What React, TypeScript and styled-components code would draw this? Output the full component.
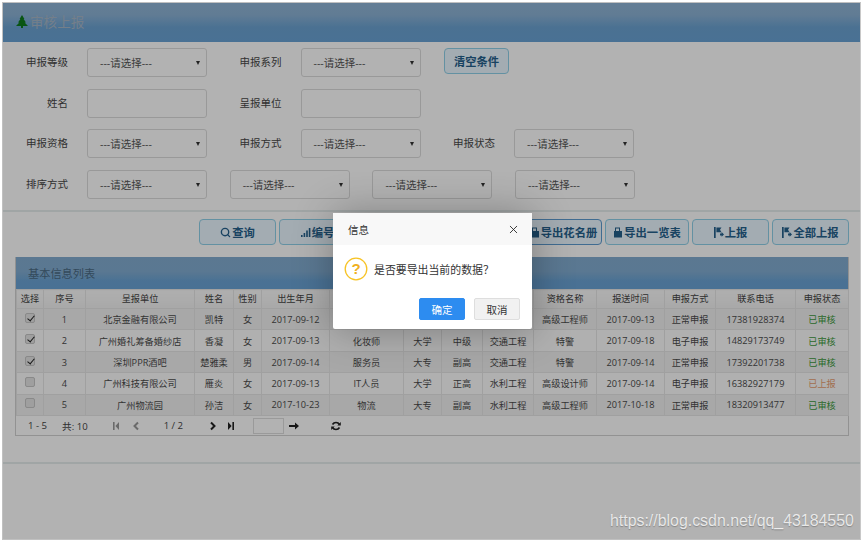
import React from "react";
import styled, { createGlobalStyle } from "styled-components";
import { Search, X } from "lucide-react";

const Global = createGlobalStyle`
  html, body { margin: 0; padding: 0; background: #fff; }
  body { font-family: "Open Sans", "Noto Sans CJK SC", sans-serif; color: #4a4a4a; overflow: hidden; }
  * { box-sizing: border-box; }
`;
const Page = styled.div`
  width: 864px; height: 541px; padding: 2px 0 0 2px; position: relative; overflow: hidden; background: #fff;
`;
const Frame = styled.div`
  position: relative; width: 859px; height: 538px; border: 1px solid #c0c0c0; border-right-color: #c8c8c8; background: #fff; overflow: hidden;
`;
const Header = styled.header`
  height: 39px; padding: 0 0 3px 13px; display: flex; align-items: center; gap: 2px;
  background: linear-gradient(#8fb4d6 0%, #8cb2d5 30%, #6ca3d2 62%, #69a2d4 100%);
`;
const HeaderTitle = styled.h1`
  margin: 0; font: 400 13.6px "Liberation Serif", "Noto Sans CJK SC", serif; color: #a6b6c6;
`;
const Filters = styled.section`
  padding: 6px 0 11px 23px; display: flex; flex-direction: column; gap: 11.7px; border-bottom: 2px solid #e6eded;
`;
const Row = styled.div`
  display: flex; align-items: flex-start; height: 29px;
`;
const Field = styled.div<{ $mr?: number }>`
  display: flex; align-items: center; flex: none; margin-right: ${p => p.$mr ?? 32.5}px;
`;
const FieldLabel = styled.label`
  width: 42px; text-align: right; white-space: nowrap; font-size: 10.5px; color: #474747; margin-right: 19px; flex: none;
  line-height: 29px;
`;
const SelectBox = styled.div<{ $mr?: number }>`
  width: 120px; height: 29px; flex: none; border: 1.5px solid #dcdcdc; border-radius: 3px; background: #fff;
  padding: 0 6px 0 12px; display: flex; align-items: center; justify-content: space-between;
  font-size: 10.5px; color: #555;
  margin-right: ${p => p.$mr ?? 0}px;
`;
const Caret = styled.span`
  width: 0; height: 0; border-left: 2.3px solid transparent; border-right: 2.3px solid transparent; border-top: 4px solid #333;
`;
const TextBox = styled.div`
  width: 120px; height: 29px; flex: none; border: 1.5px solid #dcdcdc; border-radius: 3px; background: #fff;
`;
const ActionButton = styled.button<{ $w?: number; $focus?: boolean }>`
  width: ${p => p.$w ?? 77}px; height: 26px; padding: 0; flex: none;
  display: inline-flex; align-items: center; justify-content: center; gap: 1px;
  border: 1.5px solid ${p => (p.$focus ? "#5c9bd0" : "#8fd0e8")}; border-radius: 4px;
  background: #eaf6ff; color: #24608c; font: 700 11.3px "Open Sans", "Noto Sans CJK SC", sans-serif;
`;
const Content = styled.section`
  height: 252px; padding-top: 7px; border-bottom: 2px solid #e6eded;
`;
const Toolbar = styled.div`
  display: flex; justify-content: flex-end; gap: 3px; padding-right: 11px;
`;
const TablePanel = styled.div`
  margin: 12px 0 0 12px; width: 834px; border: 1px solid #d2d2d2; border-top: 0;
`;
const PanelHead = styled.div`
  height: 32px; padding-left: 12px; display: flex; align-items: center; font-size: 11.2px; color: #4a6a84;
  background: linear-gradient(#83acd0 0%, #82acd1 45%, #6aa3d4 75%, #69a2d4 100%);
`;
const Grid = styled.table`
  width: 832px; border-collapse: collapse; table-layout: fixed; font-size: 9.2px;
`;
const Th = styled.th`
  height: 19px; padding: 0 0 2px; font-weight: 400; text-align: center; color: #444;
  border: 1px solid #e6e6e6; background: linear-gradient(#fafafa, #f2f2f2); white-space: nowrap; overflow: hidden;
`;
const Tr = styled.tr<{ $odd: boolean }>`
  background: ${p => (p.$odd ? "#f1f1f1" : "#fcfcfc")};
`;
const Td = styled.td<{ $status?: "ok" | "wait" }>`
  height: 21.4px; padding: 0; text-align: center; white-space: nowrap; overflow: hidden;
  border: 1px solid #e6e6e6; color: ${p => (p.$status === "ok" ? "#3c9a3c" : p.$status === "wait" ? "#e8a070" : "#4a4a4a")};
`;
const Check = styled.input`
  appearance: none; display: block; position: relative; margin: 0 auto 3px; width: 10px; height: 10px;
  border: 1px solid #c4c4c4; border-radius: 2px; background: #e4e4e4;
  &:checked::after {
    content: ""; position: absolute; left: 2.5px; top: 0; width: 3px; height: 6px;
    border: solid #222; border-width: 0 1.6px 1.6px 0; transform: rotate(40deg);
  }
`;
const Pager = styled.div`
  height: 19px; display: flex; align-items: center; font-size: 9.6px; color: #444; background: #fff;
`;
const PagerText = styled.span<{ $ml: number }>`
  margin-left: ${p => p.$ml}px; white-space: nowrap;
`;
const PagerIcon = styled.svg<{ $ml: number; $muted?: boolean }>`
  margin-left: ${p => p.$ml}px; width: 10px; height: 10px; flex: none; color: ${p => (p.$muted ? "#999" : "#222")};
`;
const PagerInput = styled.div`
  margin-left: 17px; width: 31px; height: 16px; border: 1px solid #ddd; background: #fff;
`;
const Overlay = styled.div`
  position: absolute; inset: 0; background: rgba(0, 0, 0, 0.3);
`;
const Dialog = styled.div`
  position: absolute; left: 330px; top: 210px; width: 199px; height: 116px; background: #fff; border-radius: 2px;
  box-shadow: 1px 1px 40px rgba(0, 0, 0, 0.3); display: flex; flex-direction: column;
`;
const DialogHead = styled.div`
  height: 32px; padding: 0 12px 0 15px; display: flex; align-items: center; justify-content: space-between;
  background: #f8f8f8; font-size: 10.5px; color: #333;
`;
const DialogBody = styled.div`
  height: 53px; padding: 0 0 5px 11px; display: flex; align-items: center; gap: 6px; font-size: 10.9px; color: #333;
`;
const DialogActions = styled.div`
  display: flex; justify-content: flex-end; gap: 9px; padding-right: 12px;
`;
const DialogButton = styled.button<{ $primary?: boolean }>`
  width: 46px; height: 22px; padding: 0; border-radius: 2px; font: 400 10.5px "Open Sans", "Noto Sans CJK SC", sans-serif;
  border: 1px solid ${p => (p.$primary ? "#2d8cf0" : "#dedede")};
  background: ${p => (p.$primary ? "#2d8cf0" : "#f1f1f1")};
  color: ${p => (p.$primary ? "#fff" : "#333")};
`;
const Watermark = styled.div`
  position: absolute; left: 610px; top: 512px; font: 400 15.9px "Liberation Sans", sans-serif; color: rgba(255, 255, 255, 0.78);
  text-shadow: 0 1px 1px rgba(0, 0, 0, 0.25); white-space: nowrap;
`;

const Ic = styled.svg`
  width: 10px; height: 11px; flex: none;
`;
const TreeIcon = () => (
  <svg width="12" height="13" viewBox="0 0 12 13" style={{ flex: "none" }}>
    <path fill="#0d7a1c" d="M6 0 8.4 4H7.6L10 7.6H8.6L12 11H7V13H5V11H0L3.4 7.6H2L4.4 4H3.6Z" />
  </svg>
);
const BarsIcon = () => (
  <Ic viewBox="0 0 10 11"><path fill="currentColor" d="M0 8h1.6v2H0zM2.6 6h1.6v4H2.6zM5.2 3.5h1.6V10H5.2zM7.8 1h1.6v9H7.8z" /></Ic>
);
const FileIcon = () => (
  <Ic viewBox="0 0 10 11"><path fill="currentColor" d="M1 4h1V0.5h5V4h2v6.5H1zM3 1.5V4h3V1.5z" /></Ic>
);
const FlagIcon = () => (
  <Ic viewBox="0 0 10 11"><path fill="currentColor" d="M0 0h1.700v11H0zM2.400 .5 7.500 .5 6 2.800 7.500 5.200H2.400zM6 6.400h1.600V5l2.400 2.400-2.400 2.400V8.400H6z" /></Ic>
);

const cols = [27, 42, 109, 39, 28, 68, 74, 38, 41, 51, 63, 68, 51, 80, 53];
const heads = ["选择", "序号", "呈报单位", "姓名", "性别", "出生年月", "", "", "", "", "资格名称", "报送时间", "申报方式", "联系电话", "申报状态"];
const rows = [
  { c: true, d: ["1", "北京金融有限公司", "凯特", "女", "2017-09-12", "", "", "", "", "高级工程师", "2017-09-13", "正常申报", "17381928374"], s: "已审核" },
  { c: true, d: ["2", "广州婚礼筹备婚纱店", "香凝", "女", "2017-09-13", "化妆师", "大学", "中级", "交通工程", "特警", "2017-09-18", "电子申报", "14829173749"], s: "已审核" },
  { c: true, d: ["3", "深圳PPR酒吧", "楚雅柔", "男", "2017-09-14", "服务员", "大专", "副高", "交通工程", "特警", "2017-09-14", "正常申报", "17392201738"], s: "已审核" },
  { c: false, d: ["4", "广州科技有限公司", "雁炎", "女", "2017-09-13", "IT人员", "大学", "正高", "水利工程", "高级设计师", "2017-09-14", "电子申报", "16382927179"], s: "已上报" },
  { c: false, d: ["5", "广州物流园", "孙洁", "女", "2017-10-23", "物流", "大专", "副高", "水利工程", "高级工程师", "2017-10-18", "正常申报", "18320913477"], s: "已审核" },
];

const Select = ({ mr }: { mr?: number }) => (
  <SelectBox $mr={mr}>---请选择---<Caret /></SelectBox>
);

export default function App() {
  return (
    <Page>
      <Global />
      <Frame>
        <Header>
          <TreeIcon />
          <HeaderTitle>审核上报</HeaderTitle>
        </Header>
        <Filters>
          <Row>
            <Field><FieldLabel>申报等级</FieldLabel><Select /></Field>
            <Field $mr={23.5}><FieldLabel>申报系列</FieldLabel><Select /></Field>
            <ActionButton $w={65}>清空条件</ActionButton>
          </Row>
          <Row>
            <Field><FieldLabel>姓名</FieldLabel><TextBox /></Field>
            <Field><FieldLabel>呈报单位</FieldLabel><TextBox /></Field>
          </Row>
          <Row>
            <Field><FieldLabel>申报资格</FieldLabel><Select /></Field>
            <Field><FieldLabel>申报方式</FieldLabel><Select /></Field>
            <Field><FieldLabel>申报状态</FieldLabel><Select /></Field>
          </Row>
          <Row>
            <Field $mr={22.7}><FieldLabel>排序方式</FieldLabel><Select /></Field>
            <Select mr={22.7} />
            <Select mr={22.7} />
            <Select />
          </Row>
        </Filters>
        <Content>
          <Toolbar>
            <ActionButton><Search size={11} strokeWidth={3} />查询</ActionButton>
            <ActionButton><BarsIcon />编号</ActionButton>
            <ActionButton $w={83} />
            <ActionButton />
            <ActionButton $focus><FileIcon />导出花名册</ActionButton>
            <ActionButton $w={84}><FileIcon />导出一览表</ActionButton>
            <ActionButton><FlagIcon />上报</ActionButton>
            <ActionButton><FlagIcon />全部上报</ActionButton>
          </Toolbar>
          <TablePanel>
            <PanelHead>基本信息列表</PanelHead>
            <Grid>
              <colgroup>{cols.map((w, i) => <col key={i} style={{ width: w }} />)}</colgroup>
              <thead><tr>{heads.map((h, i) => <Th key={i}>{h}</Th>)}</tr></thead>
              <tbody>
                {rows.map((r, i) => (
                  <Tr key={i} $odd={i % 2 === 0}>
                    <Td><Check type="checkbox" checked={r.c} readOnly /></Td>
                    {r.d.map((v, j) => <Td key={j}>{v}</Td>)}
                    <Td $status={r.s === "已审核" ? "ok" : "wait"}>{r.s}</Td>
                  </Tr>
                ))}
              </tbody>
            </Grid>
            <Pager>
              <PagerText $ml={12}>1 - 5</PagerText>
              <PagerText $ml={15}>共: 10</PagerText>
              <PagerIcon $ml={23} $muted viewBox="0 0 10 10"><path fill="currentColor" d="M2 1h1.600v8H2zM8 1v8L4.400 5z" /></PagerIcon>
              <PagerIcon $ml={10} $muted viewBox="0 0 10 10"><path fill="none" stroke="currentColor" strokeWidth="2" d="M7 1.500 3.500 5 7 8.500" /></PagerIcon>
              <PagerText $ml={23}>1 / 2</PagerText>
              <PagerIcon $ml={25} viewBox="0 0 10 10"><path fill="none" stroke="currentColor" strokeWidth="2" d="M3 1.500 6.500 5 3 8.500" /></PagerIcon>
              <PagerIcon $ml={8} viewBox="0 0 10 10"><path fill="currentColor" d="M2 1v8L5.600 5zM6.400 1H8v8H6.400z" /></PagerIcon>
              <PagerInput />
              <PagerIcon $ml={5} viewBox="0 0 10 10"><path fill="currentColor" d="M0 4h6V1.500L10 5 6 8.500V6H0z" /></PagerIcon>
              <PagerIcon $ml={32} viewBox="0 0 10 10"><path fill="none" stroke="currentColor" strokeWidth="1.600" d="M8.500 3.500A4 4 0 0 0 1.500 3.500M1.500 6.500A4 4 0 0 0 8.500 6.500" /><path fill="currentColor" d="M9.800 1v3.500H6.300zM.2 9V5.500h3.500z" /></PagerIcon>
            </Pager>
          </TablePanel>
        </Content>
        <Overlay />
        <Dialog>
          <DialogHead>信息<X size={13} strokeWidth={1.6} color="#222" /></DialogHead>
          <DialogBody>
            <svg width="24" height="24" viewBox="0 0 24 24" style={{ flex: "none" }}>
              <circle cx="12" cy="12" r="10.800" fill="#fff" stroke="#f7c325" strokeWidth="1.300" />
              <text x="12" y="17" textAnchor="middle" fontSize="15" fontWeight="700" fill="#f0b01e" fontFamily="Liberation Sans">?</text>
            </svg>
            是否要导出当前的数据？
          </DialogBody>
          <DialogActions>
            <DialogButton $primary>确定</DialogButton>
            <DialogButton>取消</DialogButton>
          </DialogActions>
        </Dialog>
      </Frame>
      <Watermark>https://blog.csdn.net/qq_43184550</Watermark>
    </Page>
  );
}
